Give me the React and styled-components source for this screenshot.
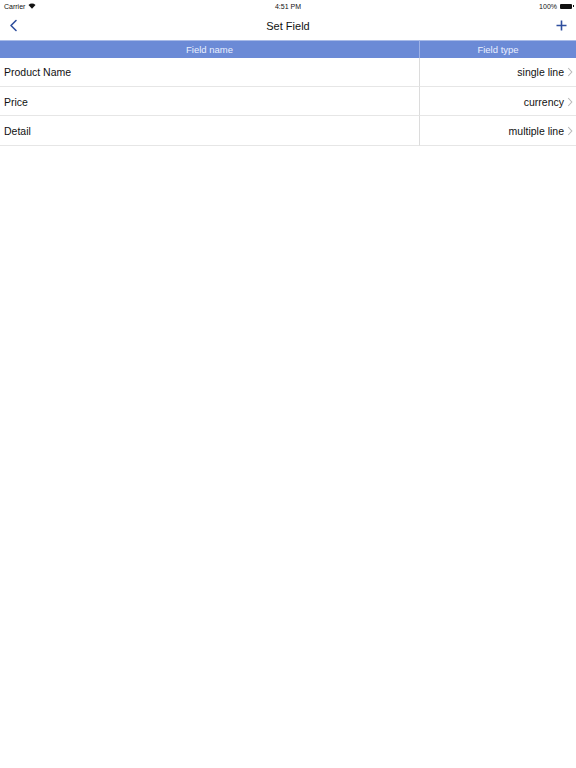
import React from "react";
import styled, { createGlobalStyle } from "styled-components";

const fields = [
  { name: "Product Name", type: "single line" },
  { name: "Price", type: "currency" },
  { name: "Detail", type: "multiple line" },
];

const GlobalStyle = createGlobalStyle`
  html, body {
    margin: 0;
    padding: 0;
    background: #fff;
    font-family: "Liberation Sans", Arial, sans-serif;
  }
`;

const Page = styled.div`
  width: 576px;
  height: 768px;
  background: #fff;
  display: flex;
  flex-direction: column;
`;

const StatusBar = styled.div`
  height: 12px;
  display: grid;
  grid-template-columns: 1fr auto 1fr;
  align-items: center;
  padding: 0 4px;
  font-size: 7px;
  color: #111;
`;

const StatusLeft = styled.div`
  display: flex;
  align-items: center;
  gap: 3px;
`;

const StatusRight = styled.div`
  display: flex;
  align-items: center;
  justify-content: flex-end;
  gap: 3px;
`;

const Battery = styled.div`
  width: 12px;
  height: 5px;
  background: #111;
  border-radius: 1px;
  position: relative;
  &:after {
    content: "";
    position: absolute;
    right: -2px;
    top: 1.5px;
    width: 1px;
    height: 2px;
    background: #111;
  }
`;

const NavBar = styled.div`
  height: 27.5px;
  display: grid;
  grid-template-columns: 40px 1fr 40px;
  align-items: center;
`;

const NavButton = styled.div`
  display: flex;
  align-items: center;
  justify-content: ${(p) => (p.right ? "flex-end" : "flex-start")};
  padding: ${(p) => (p.right ? "0 9px 0 0" : "0 0 0 9px")};
`;

const Title = styled.div`
  text-align: center;
  font-size: 11px;
  font-weight: 500;
  color: #111;
`;

const Table = styled.div`
  display: grid;
  grid-template-columns: 419px 1fr;
`;

const HeadCell = styled.div`
  height: 18px;
  background: #6b8ad6;
  color: #e9efff;
  font-size: 9.5px;
  display: flex;
  align-items: center;
  justify-content: center;
  border-top: 1px solid #a9bbe8;
  box-sizing: border-box;
  border-left: ${(p) => (p.divider ? "1px solid #9db1e6" : "none")};
`;

const Cell = styled.div`
  height: 29.4px;
  box-sizing: border-box;
  border-bottom: 1px solid #e6e6e6;
  display: flex;
  align-items: center;
  font-size: 10.5px;
  color: #111;
  padding-top: 1px;
  justify-content: ${(p) => (p.right ? "flex-end" : "flex-start")};
  padding-left: ${(p) => (p.right ? "0" : "4px")};
  padding-right: ${(p) => (p.right ? "3px" : "0")};
  border-left: ${(p) => (p.right ? "1px solid #dcdcdc" : "none")};
  gap: 3px;
`;

const Back = () => (
  <svg width="9" height="13" viewBox="0 0 9 13">
    <path d="M7 1.5 L2 6.5 L7 11.5" fill="none" stroke="#2f4f9e" strokeWidth="1.6" strokeLinecap="round" strokeLinejoin="round" />
  </svg>
);

const Plus = () => (
  <svg width="11" height="11" viewBox="0 0 11 11">
    <path d="M5.5 0.5 V10.5 M0.5 5.5 H10.5" stroke="#2f4f9e" strokeWidth="1.6" />
  </svg>
);

const Chevron = () => (
  <svg width="6" height="10" viewBox="0 0 6 10">
    <path d="M1.2 1 L4.8 5 L1.2 9" fill="none" stroke="#b9b9b9" strokeWidth="1.1" />
  </svg>
);

const Wifi = () => (
  <svg width="8" height="6" viewBox="0 0 8 6">
    <path d="M0.5 2 A5 5 0 0 1 7.5 2 L4 5.8 Z" fill="#111" />
  </svg>
);

export default function App() {
  return (
    <Page>
      <GlobalStyle />
      <StatusBar>
        <StatusLeft>
          Carrier <Wifi />
        </StatusLeft>
        <div>4:51 PM</div>
        <StatusRight>
          100% <Battery />
        </StatusRight>
      </StatusBar>
      <NavBar>
        <NavButton>
          <Back />
        </NavButton>
        <Title>Set Field</Title>
        <NavButton right>
          <Plus />
        </NavButton>
      </NavBar>
      <Table>
        <HeadCell>Field name</HeadCell>
        <HeadCell divider>Field type</HeadCell>
        {fields.map((f) => (
          <React.Fragment key={f.name}>
            <Cell>{f.name}</Cell>
            <Cell right>
              {f.type}
              <Chevron />
            </Cell>
          </React.Fragment>
        ))}
      </Table>
    </Page>
  );
}
